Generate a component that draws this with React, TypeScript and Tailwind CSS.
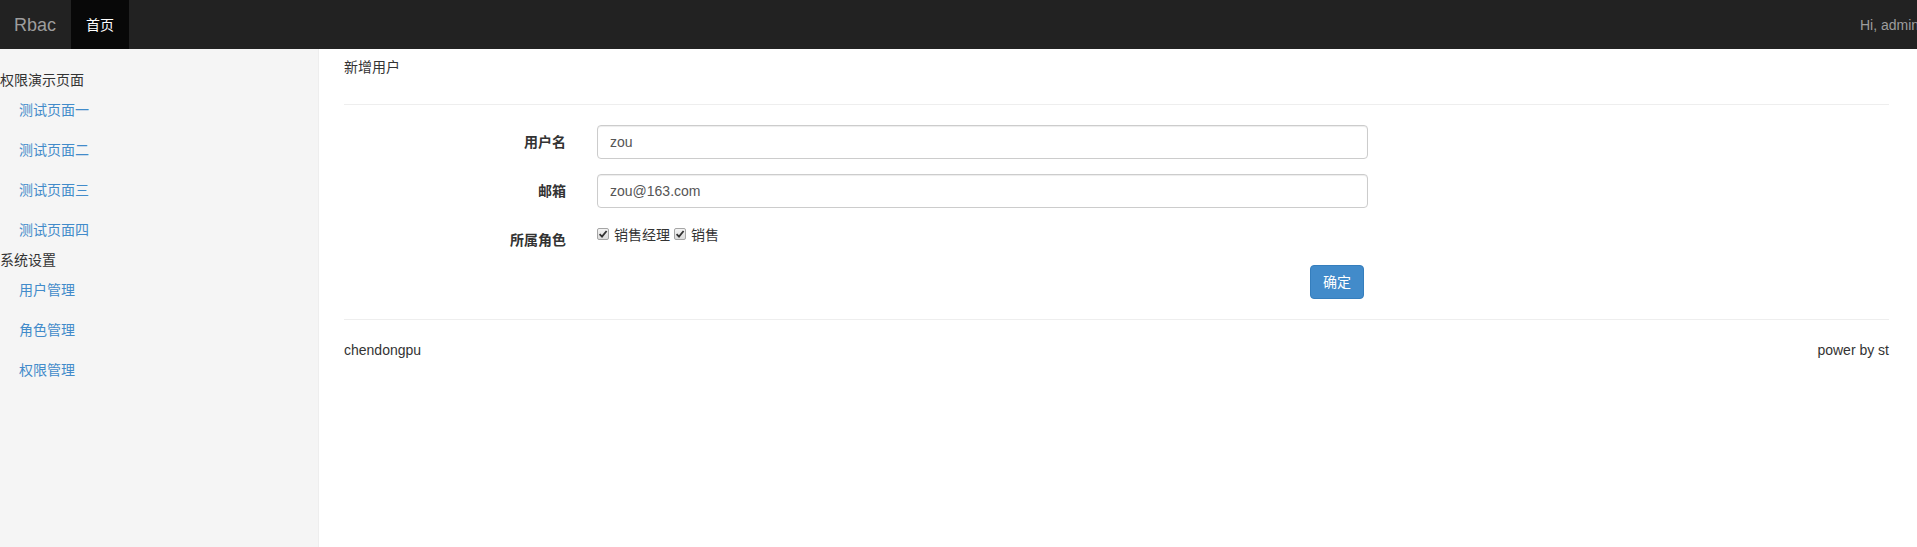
import React from "react";

const groups = [
  { title: "权限演示页面", links: ["测试页面一", "测试页面二", "测试页面三", "测试页面四"] },
  { title: "系统设置", links: ["用户管理", "角色管理", "权限管理"] },
];

function Check({ label }: { label: string }) {
  return (
    <label className="flex items-center">
      <span className="relative w-[12px] h-[12px] mt-[-2px]">
        <input
          type="checkbox"
          defaultChecked
          className="appearance-none w-[12px] h-[12px] rounded-[2px] border border-[#a5a5a5] bg-gradient-to-b from-[#f4f4f4] to-[#dcdcdc] block"
        />
        <svg viewBox="0 0 12 12" className="absolute inset-0 w-[12px] h-[12px] pointer-events-none">
          <path d="M2.6 6.2 L5 8.6 L9.6 3" fill="none" stroke="#333" strokeWidth="1.8" />
        </svg>
      </span>
      <span className="ml-[5px]">{label}</span>
    </label>
  );
}

export default function App() {
  return (
    <div className="min-h-screen flex flex-col text-[14px] leading-[20px] text-[#333] font-['Liberation_Sans','Noto_Sans_CJK_SC',sans-serif]">
      <nav className="h-[49px] bg-[#222] flex items-stretch overflow-hidden shrink-0">
        <a className="w-[71px] pl-[14px] flex items-center text-[18px] text-[#9d9d9d]">Rbac</a>
        <a className="w-[58px] bg-[#080808] text-white flex items-center justify-center">首页</a>
        <div className="flex-1" />
        <div className="w-[57px] flex items-center whitespace-nowrap overflow-hidden text-[#9d9d9d]">Hi, admin</div>
      </nav>

      <div className="flex flex-1">
        <aside className="w-[319px] shrink-0 bg-[#f5f5f5] border-r border-[#eee] pt-[21px]">
          {groups.map((g) => (
            <div key={g.title}>
              <div className="h-[20px]">{g.title}</div>
              <ul>
                {g.links.map((l) => (
                  <li key={l} className="h-[40px] flex items-center pl-[19px] text-[#428bca]">
                    {l}
                  </li>
                ))}
              </ul>
            </div>
          ))}
        </aside>

        <main className="flex-1 pl-[25px] pr-[28px] pt-[8px]">
          <div className="h-[20px]">新增用户</div>
          <div className="mt-[27px] border-t border-[#eee]" />

          <form className="pt-[20px]">
            <div className="flex items-center mb-[15px]">
              <label className="w-[222px] text-right font-bold">用户名</label>
              <input
                defaultValue="zou"
                className="ml-[31px] w-[771px] h-[34px] px-[12px] text-[#555] border border-[#ccc] rounded-[4px] shadow-[inset_0_1px_1px_rgba(0,0,0,0.075)] outline-none"
              />
            </div>
            <div className="flex items-center mb-[15px]">
              <label className="w-[222px] text-right font-bold">邮箱</label>
              <input
                defaultValue="zou@163.com"
                className="ml-[31px] w-[771px] h-[34px] px-[12px] text-[#555] border border-[#ccc] rounded-[4px] shadow-[inset_0_1px_1px_rgba(0,0,0,0.075)] outline-none"
              />
            </div>
            <div className="flex mb-[15px]">
              <label className="w-[222px] text-right font-bold pt-[7px]">所属角色</label>
              <div className="ml-[31px] flex items-center gap-[4px] pt-[2px] h-[27px] items-start">
                <Check label="销售经理" />
                <Check label="销售" />
              </div>
            </div>
            <div className="flex">
              <div className="w-[222px]" />
              <div className="ml-[31px] w-[771px] flex justify-end pr-[4px]">
                <button
                  type="button"
                  className="w-[54px] h-[34px] rounded-[4px] bg-[#428bca] border border-[#357ebd] text-white"
                >
                  确定
                </button>
              </div>
            </div>
          </form>

          <div className="mt-[20px] border-t border-[#eee]" />
          <footer className="mt-[20px] flex justify-between">
            <span>chendongpu</span>
            <span>power by st</span>
          </footer>
        </main>
      </div>
    </div>
  );
}
